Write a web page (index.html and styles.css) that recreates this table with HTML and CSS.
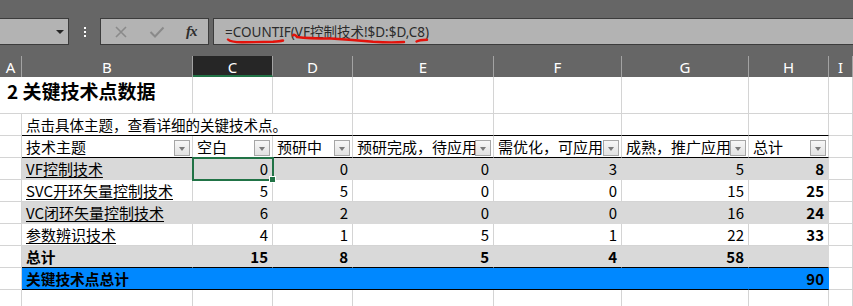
FILE: index.html
```html
<!DOCTYPE html>
<html lang="zh-CN">
<head>
    <meta charset="UTF-8">
    <meta name="viewport" content="width=device-width, initial-scale=1.0">
    <title>关键技术点数据</title>
    <link rel="stylesheet" href="styles.css">
</head>
<body>

    <!-- Name box + formula bar -->
    <div class="toolbar">
        <div class="name-box"><span class="caret"></span></div>
        <div class="grip"><i></i><i></i><i></i></div>
        <div class="fn-buttons">
            <svg width="14" height="12" viewBox="0 0 14 12"><path d="M2 1 L12 11 M12 1 L2 11" stroke="#8a8a8a" stroke-width="1.6" fill="none"/></svg>
            <svg width="16" height="12" viewBox="0 0 16 12"><path d="M1.5 6 L6 10.5 L14.5 1.5" stroke="#8a8a8a" stroke-width="2" fill="none"/></svg>
            <span class="fx">fx</span>
        </div>
        <div class="formula">
            <span class="formula-text">=COUNTIF(VF控制技术!$D:$D,C8)</span>
            <!-- pen marks under the formula parts -->
            <svg class="marks" width="240" height="27" viewBox="0 0 240 27">
                <path d="M15 21.5 Q18 24.5 30 24.3 L60 23.8 Q67 23.3 70 22.5" />
                <path d="M80 17.5 Q81 15.5 84 19 Q95 20.5 118 20.5 Q140 22 160 23.8 Q178 24.8 191 24" />
                <path d="M203.5 23.5 Q206 22 214 21.8" />
            </svg>
        </div>
    </div>

    <div class="sheet">
        <!-- column letters -->
        <div class="hd">A</div>
        <div class="hd">B</div>
        <div class="hd active">C</div>
        <div class="hd">D</div>
        <div class="hd">E</div>
        <div class="hd">F</div>
        <div class="hd">G</div>
        <div class="hd">H</div>
        <div class="hd">I</div>

        <!-- row 2: title -->
        <div class="c title span2">2&nbsp;关键技术点数据</div>
        <div class="c"></div><div class="c"></div><div class="c"></div><div class="c"></div><div class="c"></div><div class="c"></div><div class="c"></div>

        <!-- row 3: hint -->
        <div class="c"></div>
        <div class="c hint span3 rule">点击具体主题，查看详细的关键技术点。</div>
        <div class="c rule"></div><div class="c rule"></div><div class="c rule"></div><div class="c rule"></div>
        <div class="c"></div>

        <!-- row 4: table headers -->
        <div class="c"></div>
        <div class="c th rule">技术主题<span class="filter"></span></div>
        <div class="c th rule">空白<span class="filter"></span></div>
        <div class="c th rule">预研中<span class="filter"></span></div>
        <div class="c th rule">预研完成，待应用<span class="filter"></span></div>
        <div class="c th rule">需优化，可应用<span class="filter"></span></div>
        <div class="c th rule">成熟，推广应用<span class="filter"></span></div>
        <div class="c th rule">总计<span class="filter"></span></div>
        <div class="c"></div>

        <!-- rows 5-8 -->
        <div class="c"></div>
        <div class="c band"><a href="#">VF控制技术</a></div>
        <div class="c band num selected">0</div>
        <div class="c band num">0</div>
        <div class="c band num">0</div>
        <div class="c band num">3</div>
        <div class="c band num">5</div>
        <div class="c band num bold">8</div>
        <div class="c"></div>

        <div class="c"></div>
        <div class="c"><a href="#">SVC开环矢量控制技术</a></div>
        <div class="c num">5</div>
        <div class="c num">5</div>
        <div class="c num">0</div>
        <div class="c num">0</div>
        <div class="c num">15</div>
        <div class="c num bold">25</div>
        <div class="c"></div>

        <div class="c"></div>
        <div class="c band"><a href="#">VC闭环矢量控制技术</a></div>
        <div class="c band num">6</div>
        <div class="c band num">2</div>
        <div class="c band num">0</div>
        <div class="c band num">0</div>
        <div class="c band num">16</div>
        <div class="c band num bold">24</div>
        <div class="c"></div>

        <div class="c"></div>
        <div class="c"><a href="#">参数辨识技术</a></div>
        <div class="c num">4</div>
        <div class="c num">1</div>
        <div class="c num">5</div>
        <div class="c num">1</div>
        <div class="c num">22</div>
        <div class="c num bold">33</div>
        <div class="c"></div>

        <!-- row 9: totals -->
        <div class="c"></div>
        <div class="c band bold rule">总计</div>
        <div class="c band num bold rule">15</div>
        <div class="c band num bold rule">8</div>
        <div class="c band num bold rule">5</div>
        <div class="c band num bold rule">4</div>
        <div class="c band num bold rule">58</div>
        <div class="c band rule"></div>
        <div class="c"></div>

        <!-- row 10: grand total -->
        <div class="c"></div>
        <div class="c blue bold span6 rule">关键技术点总计</div>
        <div class="c blue num bold rule">90</div>
        <div class="c"></div>

        <!-- row 11 -->
        <div class="c"></div><div class="c"></div><div class="c"></div><div class="c"></div><div class="c"></div><div class="c"></div><div class="c"></div><div class="c"></div><div class="c"></div>
    </div>

</body>
</html>
```

FILE: styles.css
```css
body {
    margin: 0;
    background-color: #ffffff;
    font-family: "Noto Sans CJK SC", "Noto Sans", sans-serif;
    overflow: hidden;
}

/* ---------- formula bar ---------- */
.toolbar {
    display: flex;
    height: 56px;
    padding-top: 18px;
    box-sizing: border-box;
    background-color: #666666;
}
.name-box, .fn-buttons, .formula {
    height: 27px;
    box-sizing: border-box;
    background-color: #b3b3b3;
    border: 1px solid #3c3c3c;
}
.name-box {
    width: 70px;
    margin-left: -1px;
    position: relative;
}
.caret {
    position: absolute;
    left: 56px;
    top: 11px;
    border-left: 4px solid transparent;
    border-right: 4px solid transparent;
    border-top: 4px solid #262626;
}
.grip {
    width: 31px;
    display: flex;
    flex-direction: column;
    align-items: center;
    justify-content: center;
    gap: 2px;
    height: 27px;
}
.grip i {
    display: block;
    width: 2px;
    height: 2px;
    background-color: #ffffff;
}
.fn-buttons {
    width: 109px;
    display: flex;
    align-items: center;
    padding-left: 13px;
    gap: 21px;
}
.fx {
    font-family: "Liberation Serif", serif;
    font-style: italic;
    font-weight: bold;
    font-size: 15px;
    color: #2e2e2e;
    margin-left: 0;
    letter-spacing: -1px;
}
.formula {
    flex: 1;
    margin-left: 4px;
    margin-right: -2px;
    position: relative;
    display: flex;
    align-items: center;
    padding-left: 11px;
}
.formula-text {
    font-family: "Noto Sans", "Noto Sans CJK SC", sans-serif;
    font-size: 13.5px;
    color: #2b2b2b;
    line-height: 20px;
}
.marks {
    position: absolute;
    left: -1px;
    top: -1px;
    overflow: visible;
}
.marks path {
    fill: none;
    stroke: #e3120b;
    stroke-width: 2.4;
    stroke-linecap: round;
}

/* ---------- sheet grid ---------- */
.sheet {
    display: grid;
    grid-template-columns: 22px 171px 80px 80px 141px 128px 127px 80px 24px;
    grid-template-rows: 21px 37px;
    grid-auto-rows: 22px;
    font-size: 14.7px;
    color: #000000;
}
.hd {
    background-color: #666666;
    color: #ffffff;
    font-family: "Noto Sans", sans-serif;
    font-size: 15px;
    display: flex;
    align-items: center;
    justify-content: center;
    border-right: 1px solid #a3a3a3;
    box-sizing: border-box;
    line-height: 20px;
}
.hd.active {
    background-color: #262626;
    border-bottom: 2px solid #217346;
    padding-top: 2px;
}
.c {
    border-right: 1px solid #d4d4d4;
    border-bottom: 1px solid #d4d4d4;
    box-sizing: border-box;
    display: flex;
    align-items: center;
    padding: 0 4px;
    white-space: nowrap;
    line-height: 20px;
    position: relative;
}
.span2 { grid-column: span 2; }
.span3 { grid-column: span 3; }
.span6 { grid-column: span 6; }

.title {
    font-size: 19px;
    font-weight: bold;
    padding-left: 7px;
    padding-bottom: 8px;
}
.hint {
    font-size: 14.5px;
}
.th {
    font-size: 15px;
    padding-right: 20px;
}
.filter {
    position: absolute;
    right: 2px;
    top: 4px;
    width: 16px;
    height: 16px;
    box-sizing: border-box;
    border: 1px solid #a6a6a6;
    background: linear-gradient(#f7f7f7, #e2e2e2);
}
.filter::after {
    content: "";
    position: absolute;
    left: 4px;
    top: 6px;
    border-left: 3.5px solid transparent;
    border-right: 3.5px solid transparent;
    border-top: 4px solid #7a7a7a;
}
.rule {
    border-bottom-color: #000000;
}
.band {
    background-color: #d9d9d9;
    border-right-color: #d9d9d9;
}
.band:not(.rule) {
    border-bottom-color: #d9d9d9;
}
.blue {
    background-color: #0088ff;
    border-right-color: #0088ff;
}
.num {
    justify-content: flex-end;
    font-size: 15px;
}
.bold {
    font-weight: bold;
}
.c a {
    color: #000000;
    text-decoration: underline;
    text-underline-offset: 2px;
    font-size: 15px;
}

/* active cell */
.selected {
    outline: 2px solid #217346;
    outline-offset: -1px;
    z-index: 1;
}
.selected::after {
    content: "";
    position: absolute;
    right: -3px;
    bottom: -3px;
    width: 5px;
    height: 5px;
    background-color: #217346;
    box-shadow: 0 0 0 1px #ffffff;
}
```
